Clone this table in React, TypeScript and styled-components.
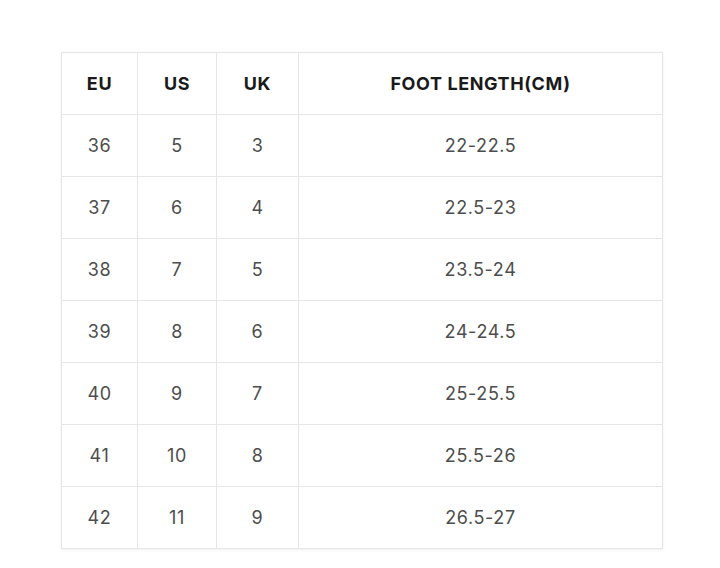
import React from "react";
import styled, { createGlobalStyle } from "styled-components";

const Global = createGlobalStyle`
  html, body { margin: 0; padding: 0; background: #ffffff; }
  body { font-family: Inter, "Open Sans", sans-serif; }
`;

const Page = styled.div`
  width: 720px;
  height: 568px;
  background: #fff;
  padding: 52px 0 0 61px;
  box-sizing: border-box;
`;

const Table = styled.table`
  border-collapse: collapse;
  width: 601px;
  table-layout: fixed;
  box-shadow: 0 1px 3px rgba(0, 0, 0, 0.06);
`;

const Col = styled.col<{ $w: number }>`
  width: ${(p) => p.$w}px;
`;

const Cell = styled.td<{ $head?: boolean }>`
  border: 1px solid #e6e6e6;
  height: 61px;
  padding: 0;
  text-align: center;
  vertical-align: middle;
  font-family: Inter, "Open Sans", sans-serif;
  font-size: 18px;
  font-weight: ${(p) => (p.$head ? 700 : 400)};
  color: ${(p) => (p.$head ? "#1a1a1a" : "#4d4d4d")};
  letter-spacing: ${(p) => (p.$head ? "0.6px" : "0.6px")};
`;

const widths = [76, 79, 82, 364];
const header = ["EU", "US", "UK", "FOOT LENGTH(CM)"];
const rows = [
  ["36", "5", "3", "22-22.5"],
  ["37", "6", "4", "22.5-23"],
  ["38", "7", "5", "23.5-24"],
  ["39", "8", "6", "24-24.5"],
  ["40", "9", "7", "25-25.5"],
  ["41", "10", "8", "25.5-26"],
  ["42", "11", "9", "26.5-27"],
];

export default function App() {
  return (
    <>
      <Global />
      <Page>
        <Table>
          <colgroup>
            {widths.map((w, i) => (
              <Col key={i} $w={w} />
            ))}
          </colgroup>
          <tbody>
            <tr>
              {header.map((h) => (
                <Cell key={h} $head>
                  {h}
                </Cell>
              ))}
            </tr>
            {rows.map((r) => (
              <tr key={r[0]}>
                {r.map((c, i) => (
                  <Cell key={i}>{c}</Cell>
                ))}
              </tr>
            ))}
          </tbody>
        </Table>
      </Page>
    </>
  );
}
